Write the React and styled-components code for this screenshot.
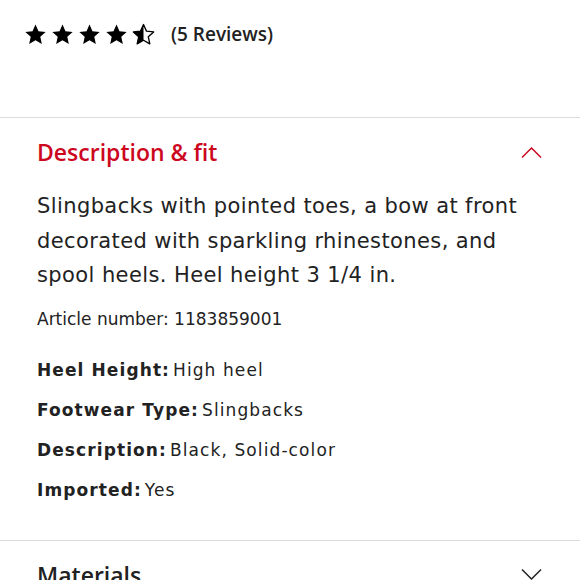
import React from "react";
import styled, { createGlobalStyle } from "styled-components";

const red = "#cc071e";
const ink = "#222222";

const GlobalStyle = createGlobalStyle`
  body {
    margin: 0;
    background: #ffffff;
    font-family: "DejaVu Sans", "Noto Sans", sans-serif;
    color: ${ink};
  }
`;

const Page = styled.div`
  width: 580px;
  height: 580px;
  overflow: hidden;
`;

const RatingRow = styled.div`
  height: 117px;
  display: flex;
  align-items: center;
  padding: 0 0 49px 24px;
  box-sizing: border-box;
`;

const Stars = styled.div`
  display: flex;
  gap: 4px;
`;

const ReviewCount = styled.span`
  margin-left: 16px;
  font-family: "Open Sans", sans-serif;
  font-size: 19px;
  font-weight: 600;
  line-height: 22px;
  color: ${ink};
`;

const Section = styled.section`
  border-top: 1px solid #dcdcdc;
  padding: 0 38px 30px 37px;
`;

const SectionHeader = styled.div`
  display: flex;
  justify-content: space-between;
  align-items: center;
  padding-top: 19px;
`;

const SectionTitle = styled.h2`
  margin: 0;
  font-family: "Open Sans", sans-serif;
  font-size: 23px;
  line-height: 30px;
  font-weight: 600;
  color: ${(p) => (p.$open ? red : ink)};
`;

const Lead = styled.p`
  margin: 22px 0 0;
  font-size: 21px;
  line-height: 34.5px;
  letter-spacing: 0.4px;
  color: ${ink};
`;

const Article = styled.p`
  margin: 14px 0 19px;
  font-size: 17px;
  line-height: 24px;
`;

const Attr = styled.div`
  font-size: 17px;
  line-height: 40px;
  letter-spacing: 1.1px;
`;

const AttrLabel = styled.span`
  font-weight: 700;
  margin-right: 3px;
`;

const STAR = "M12 1.6l3.1 6.9 7.5.8-5.6 5.1 1.6 7.4L12 18l-6.6 3.8 1.6-7.4-5.6-5.1 7.5-.8z";

const Star = ({ half }) => (
  <svg width="23" height="23" viewBox="0 0 24 24">
    <defs>
      <clipPath id="halfclip">
        <rect x="0" y="0" width="12" height="24" />
      </clipPath>
    </defs>
    {half ? (
      <>
        <path d={STAR} fill="none" stroke="#000" strokeWidth="1.4" strokeLinejoin="round" />
        <path d={STAR} fill="#000" clipPath="url(#halfclip)" />
      </>
    ) : (
      <path d={STAR} fill="#000" />
    )}
  </svg>
);

const Chevron = ({ up, color }) => (
  <svg width="21" height="13" viewBox="0 0 21 13">
    <path
      d={up ? "M1 11.5L10.5 2L20 11.5" : "M1 1.5L10.5 11L20 1.5"}
      fill="none"
      stroke={color}
      strokeWidth="1.5"
    />
  </svg>
);

const attributes = [
  ["Heel Height:", "High heel"],
  ["Footwear Type:", "Slingbacks"],
  ["Description:", "Black, Solid-color"],
  ["Imported:", "Yes"],
];

export default function App() {
  return (
    <Page>
      <GlobalStyle />
      <RatingRow>
        <Stars>
          {[0, 1, 2, 3].map((i) => (
            <Star key={i} />
          ))}
          <Star half />
        </Stars>
        <ReviewCount>(5 Reviews)</ReviewCount>
      </RatingRow>

      <Section>
        <SectionHeader>
          <SectionTitle $open>Description &amp; fit</SectionTitle>
          <Chevron up color={red} />
        </SectionHeader>
        <Lead>
          Slingbacks with pointed toes, a bow at front decorated with sparkling
          rhinestones, and spool heels. Heel height 3 1/4 in.
        </Lead>
        <Article>Article number: 1183859001</Article>
        {attributes.map(([label, value]) => (
          <Attr key={label}>
            <AttrLabel>{label}</AttrLabel>
            {value}
          </Attr>
        ))}
      </Section>

      <Section>
        <SectionHeader>
          <SectionTitle>Materials</SectionTitle>
          <Chevron color={ink} />
        </SectionHeader>
      </Section>
    </Page>
  );
}
